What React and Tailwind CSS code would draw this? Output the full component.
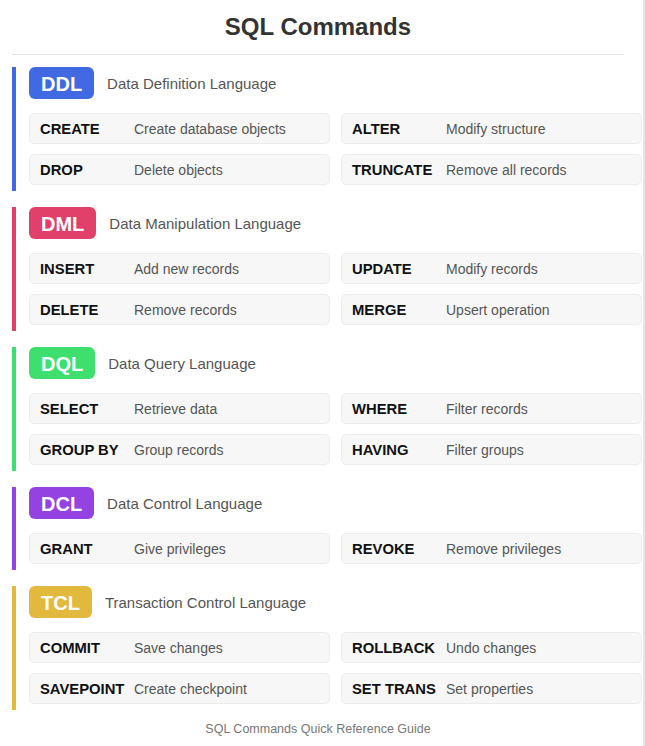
import React from 'react';

// SQL quick reference, grouped by command family
const groups = [
  {
    tag: 'DDL',
    name: 'Data Definition Language',
    bar: 'border-[#4169e1]',
    badge: 'bg-[#4169e1]',
    items: [
      ['CREATE', 'Create database objects'],
      ['ALTER', 'Modify structure'],
      ['DROP', 'Delete objects'],
      ['TRUNCATE', 'Remove all records'],
    ],
  },
  {
    tag: 'DML',
    name: 'Data Manipulation Language',
    bar: 'border-[#e0406a]',
    badge: 'bg-[#e0406a]',
    items: [
      ['INSERT', 'Add new records'],
      ['UPDATE', 'Modify records'],
      ['DELETE', 'Remove records'],
      ['MERGE', 'Upsert operation'],
    ],
  },
  {
    tag: 'DQL',
    name: 'Data Query Language',
    bar: 'border-[#3edf6f]',
    badge: 'bg-[#3edf6f]',
    items: [
      ['SELECT', 'Retrieve data'],
      ['WHERE', 'Filter records'],
      ['GROUP BY', 'Group records'],
      ['HAVING', 'Filter groups'],
    ],
  },
  {
    tag: 'DCL',
    name: 'Data Control Language',
    bar: 'border-[#9442e2]',
    badge: 'bg-[#9442e2]',
    items: [
      ['GRANT', 'Give privileges'],
      ['REVOKE', 'Remove privileges'],
    ],
  },
  {
    tag: 'TCL',
    name: 'Transaction Control Language',
    bar: 'border-[#e2b93d]',
    badge: 'bg-[#e2b93d]',
    items: [
      ['COMMIT', 'Save changes'],
      ['ROLLBACK', 'Undo changes'],
      ['SAVEPOINT', 'Create checkpoint'],
      ['SET TRANS', 'Set properties'],
    ],
  },
];

function Command({ cmd, desc }) {
  return (
    <div className="flex h-[31px] items-center rounded-[5px] border border-[#ececec] bg-[#f7f7f7] pl-[10px] pt-px">
      <span className="w-[94px] shrink-0 whitespace-nowrap text-[14.8px] font-bold leading-5 text-[#111]">{cmd}</span>
      <span className="whitespace-nowrap text-[14px] leading-5 text-[#555]">{desc}</span>
    </div>
  );
}

function Group({ g }) {
  return (
    <section className={`w-[630px] border-l-4 ${g.bar} pb-[6px] pl-[13px]`}>
      <div className="flex items-center">
        <span className={`${g.badge} rounded-md px-3 pb-[3px] pt-[5px] text-xl font-bold leading-6 text-white`}>{g.tag}</span>
        <span className="ml-[13px] pt-[2px] text-[15px] leading-5 text-[#555]">{g.name}</span>
      </div>
      <div className="mt-[14px] grid grid-cols-[301px_301px] gap-x-[11px] gap-y-[10px]">
        {g.items.map(([cmd, desc]) => (
          <Command key={cmd} cmd={cmd} desc={desc} />
        ))}
      </div>
    </section>
  );
}

export default function App() {
  return (
    <div className="w-[645px] bg-white font-['Liberation_Sans',Arial,sans-serif]">
      <div className="min-h-[746px] w-[645px] border-r-2 border-[#e6e6e6] pt-[11px]">
        <div className="ml-3 w-[612px]">
          <h1 className="text-center text-[24px] font-bold leading-8 text-[#333]">SQL Commands</h1>
          <div className="mt-[11px] h-px bg-[#e5e5e5]" />
        </div>
        <div className="ml-3 mt-[12px] flex flex-col gap-4">
          {groups.map((g) => (
            <Group key={g.tag} g={g} />
          ))}
        </div>
        <p className="ml-3 mt-[10px] w-[612px] text-center text-[12.5px] text-[#777]">SQL Commands Quick Reference Guide</p>
      </div>
    </div>
  );
}
